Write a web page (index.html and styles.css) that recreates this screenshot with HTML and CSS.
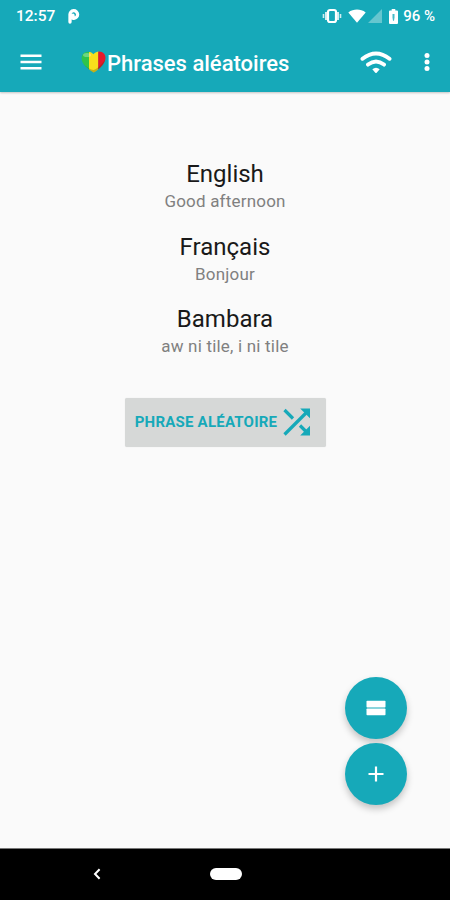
FILE: index.html
```html
<!DOCTYPE html>
<html lang="fr">
<head>
<meta charset="utf-8">
<title>Phrases aléatoires</title>
<link rel="stylesheet" href="styles.css">
</head>
<body>
<div class="screen">
  <header class="header">
    <div class="status">
      <span class="clock">12:57</span>
      <svg class="brand" width="12" height="15" viewBox="0 0 12 15"><path d="M2 13V5.8A3.8 3.8 0 1 1 6 9.3H5V6.2" fill="none" stroke="#fff" stroke-width="3.3" stroke-linecap="round" stroke-linejoin="round"/></svg>
      <div class="indicators">
        <svg class="vibrate" width="20" height="16" viewBox="0 0 20 16" fill="none" stroke="#fff"><rect x="6" y="2" width="8" height="12" rx="2" stroke-width="2.2"/><path d="M4 4v8M16 4v8" stroke-width="2" opacity=".8"/><path d="M1.5 6v4M18.5 6v4" stroke-width="1.6" opacity=".8"/></svg>
        <svg class="wifi-full" width="18" height="14" viewBox="0 0 18 14"><path d="M.3 3.4C5.5-.4 12.5-.4 17.7 3.4L9 13.8Z" fill="#fff"/></svg>
        <svg class="signal" width="14" height="14" viewBox="0 0 14 14"><path d="M14 0V14H0Z" fill="#65c6cf"/></svg>
        <svg class="battery" width="9" height="15" viewBox="0 0 9 15"><path d="M2.7 0h3.6v1.6H8q1 0 1 1V14q0 1-1 1H1q-1 0-1-1V2.6q0-1 1-1h1.7Z" fill="#fff"/><path d="M3.5 5h2v3.4l-.5 3.4h-1l-.5-3.4Z" fill="#16a9b9" opacity=".8"/></svg>
        <span class="percent">96 %</span>
      </div>
    </div>
    <div class="toolbar">
      <svg class="menu" width="22" height="16" viewBox="0 0 22 16"><path d="M.5 1.7h21M.5 8h21M.5 14.3h21" stroke="#fff" stroke-width="2.6"/></svg>
      <svg class="heart" width="25" height="23" viewBox="0 0 25 23">
        <defs><clipPath id="heart-shape"><path d="M12.5 3.2C9.5-.3 4.1 0 1.8 3.3-.8 7.2 1.1 11.9 4.4 15.2 7 17.8 10 20 12.8 21.5 16 19.6 19.1 17.2 21.6 14 24.2 10.7 25.8 6 23.1 2.8 20.4-.2 15.4-.2 12.5 3.2Z"/></clipPath></defs>
        <g clip-path="url(#heart-shape)"><path d="M0 0H9V23H0Z" fill="#2fc44b"/><path d="M8 0H17.5V23H8Z" fill="#f8df1c"/><path d="M17.2 0H25V23H17.2Z" fill="#e5192c"/><path d="M1 12Q8 19 12.7 19 18 17 24 9V23H0Z" fill="#54420b" opacity=".3"/><ellipse cx="6" cy="4" rx="4" ry="2" fill="#fff" opacity=".3"/></g>
      </svg>
      <h1 class="title">Phrases aléatoires</h1>
      <svg class="wifi" width="32" height="24" viewBox="0 0 32 24"><path d="M2.5 8.8Q16-2 29.5 8.8M8 14.6Q16 8.2 24 14.6" fill="none" stroke="#fff" stroke-width="3.9" stroke-linecap="round"/><path d="M12.3 19.2Q16 16.2 19.7 19.2L16.7 22.7Q16 23.4 15.3 22.7Z" fill="#fff"/></svg>
      <svg class="more" width="6" height="18" viewBox="0 0 6 18" fill="#fff"><circle cx="3" cy="2.6" r="2.5"/><circle cx="3" cy="9" r="2.5"/><circle cx="3" cy="15.4" r="2.5"/></svg>
    </div>
  </header>
  <main class="content">
    <section class="phrase"><h2 class="language">English</h2><p class="text">Good afternoon</p></section>
    <section class="phrase"><h2 class="language">Français</h2><p class="text">Bonjour</p></section>
    <section class="phrase"><h2 class="language">Bambara</h2><p class="text">aw ni tile, i ni tile</p></section>
    <button class="random"><span class="label">PHRASE ALÉATOIRE</span>
      <svg class="shuffle" width="28" height="28" viewBox="0 0 28 28"><path d="M1.5 26.5 24 4M1.5 2 10 10.5M17 17.5 24 24.5" fill="none" stroke="#16a9b9" stroke-width="3.2"/><path d="M17.2.5H27V10.3ZM27 17.7V27.5H17.2Z" fill="#16a9b9"/></svg>
    </button>
    <div class="actions">
      <button class="fab" aria-label="Cartes"><svg width="20" height="16" viewBox="0 0 20 16" fill="#fff"><rect x=".5" y=".8" width="19" height="6.8" rx=".8"/><rect x=".5" y="8.4" width="19" height="6.8" rx=".8"/></svg></button>
      <button class="fab" aria-label="Ajouter"><svg width="16" height="16" viewBox="0 0 16 16"><path d="M8 .5v15M.5 8h15" stroke="#fff" stroke-width="2.2"/></svg></button>
    </div>
  </main>
  <nav class="navbar">
    <svg class="back" width="8" height="12" viewBox="0 0 8 12"><path d="M6.6 1.2 2 6l4.6 4.8" fill="none" stroke="#fff" stroke-width="2"/></svg>
    <span class="home"></span>
  </nav>
</div>
</body>
</html>
```
FILE: styles.css
```css
* { box-sizing: border-box; }
body { margin: 0; font-family: Roboto, "Liberation Sans", sans-serif; background: #fafafa; }
svg { display: block; flex: none; }
h1, h2, p { margin: 0; white-space: nowrap; }
button { border: 0; padding: 0; font-family: inherit; }
.screen { width: 450px; height: 900px; display: flex; flex-direction: column; overflow: hidden; }
.header { height: 92px; flex: none; background: #16a9b9; color: #fff; box-shadow: 0 1px 2px rgba(0, 0, 0, .22); }
.status { height: 32px; display: flex; align-items: center; padding: 0 15px 0 16px; }
.clock { font-size: 15.5px; font-weight: 500; line-height: 32px; }
.brand { margin-left: 13px; }
.indicators { margin-left: auto; display: flex; align-items: center; }
.wifi-full { margin-left: 6px; }
.signal { margin-left: 2px; }
.battery { margin: 0 5px 0 7px; }
.percent { font-size: 15px; font-weight: 500; white-space: nowrap; }
.toolbar { height: 60px; display: flex; align-items: center; padding: 0 20.5px 0 20px; }
.heart { margin-left: 39px; }
.title { font-size: 22px; font-weight: 500; line-height: 30px; margin: 3px 0 0 1px; }
.wifi { margin-left: auto; }
.more { margin-left: 31.5px; }
.content { flex: 1; position: relative; display: flex; flex-direction: column; align-items: center; padding-top: 66px; }
.phrase { height: 72.5px; flex: none; text-align: center; }
.language { font-size: 24px; font-weight: 400; line-height: 32px; color: #191919; }
.text { font-size: 17px; letter-spacing: .2px; line-height: 23.5px; color: #808080; }
.random { margin-top: 22px; width: 201px; height: 49px; display: flex; align-items: center; justify-content: center; gap: 6px; padding-right: 4px; border-radius: 2px; background: #d6d8d7; box-shadow: 0 0 1px rgba(0, 0, 0, .15); color: #16a9b9; }
.label { font-size: 15px; font-weight: 700; letter-spacing: .22px; white-space: nowrap; }
.actions { position: absolute; right: 43px; bottom: 43.5px; display: flex; flex-direction: column; gap: 4px; }
.fab { width: 62px; height: 62px; border-radius: 50%; background: #16a9b9; display: flex; align-items: center; justify-content: center; box-shadow: 0 4px 7px rgba(0, 0, 0, .22); }
.navbar { height: 52px; flex: none; background: #000; border-top: 1px solid #777; display: flex; align-items: center; padding: 0 0 1px 93px; }
.home { width: 32px; height: 12px; margin-left: 109px; border-radius: 6px; background: #fff; }
```
